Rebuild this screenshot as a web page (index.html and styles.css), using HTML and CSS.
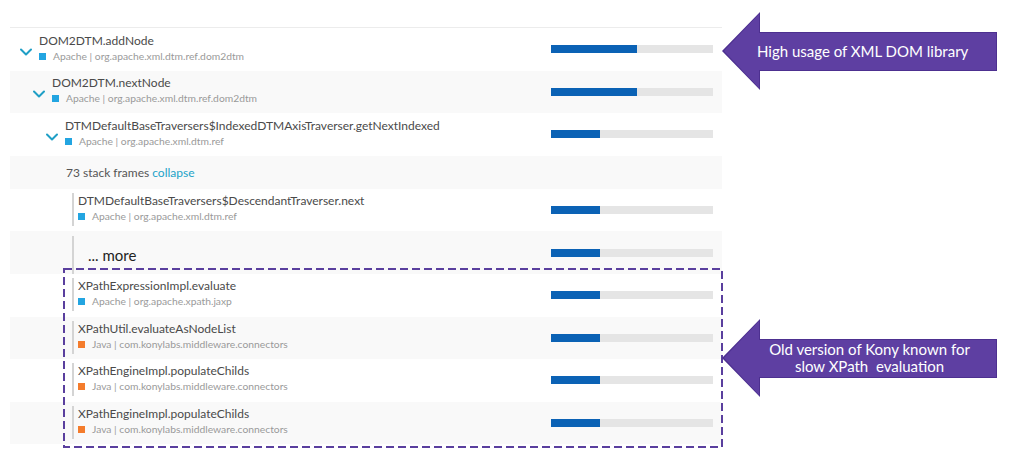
FILE: index.html
```html
<!DOCTYPE html>
<html>
<head>
<meta charset="utf-8">
<link rel="stylesheet" href="styles.css">
</head>
<body>
<div class="page">
  <div class="tree">
    <div class="row">
      <div class="cell lvl0">
        <span class="chev"><svg width="12" height="8" viewBox="0 0 12 8"><path d="M1 1.5 L6 6.5 L11 1.5" /></svg></span>
        <div class="frame-text">
          <div class="title">DOM2DTM.addNode</div>
          <div class="sub"><span class="sq apache"></span>Apache | org.apache.xml.dtm.ref.dom2dtm</div>
        </div>
      </div>
      <div class="bar"><div class="fill" style="width:53%"></div></div>
    </div>
    <div class="row alt">
      <div class="cell lvl1">
        <span class="chev"><svg width="12" height="8" viewBox="0 0 12 8"><path d="M1 1.5 L6 6.5 L11 1.5" /></svg></span>
        <div class="frame-text">
          <div class="title">DOM2DTM.nextNode</div>
          <div class="sub"><span class="sq apache"></span>Apache | org.apache.xml.dtm.ref.dom2dtm</div>
        </div>
      </div>
      <div class="bar"><div class="fill" style="width:53%"></div></div>
    </div>
    <div class="row">
      <div class="cell lvl2">
        <span class="chev"><svg width="12" height="8" viewBox="0 0 12 8"><path d="M1 1.5 L6 6.5 L11 1.5" /></svg></span>
        <div class="frame-text">
          <div class="title">DTMDefaultBaseTraversers$IndexedDTMAxisTraverser.getNextIndexed</div>
          <div class="sub"><span class="sq apache"></span>Apache | org.apache.xml.dtm.ref</div>
        </div>
      </div>
      <div class="bar"><div class="fill" style="width:30%"></div></div>
    </div>
    <div class="row alt short">
      <div class="cell stack">73 stack frames <span class="link">collapse</span></div>
    </div>
    <div class="row">
      <div class="cell framed">
        <div class="frame-text lined">
          <div class="title">DTMDefaultBaseTraversers$DescendantTraverser.next</div>
          <div class="sub"><span class="sq apache"></span>Apache | org.apache.xml.dtm.ref</div>
        </div>
      </div>
      <div class="bar"><div class="fill" style="width:30%"></div></div>
    </div>
    <div class="row alt">
      <div class="cell framed more-cell">
        <div class="more">... more</div>
      </div>
      <div class="bar"><div class="fill" style="width:30%"></div></div>
    </div>
    <div class="row">
      <div class="cell framed">
        <div class="frame-text lined">
          <div class="title">XPathExpressionImpl.evaluate</div>
          <div class="sub"><span class="sq apache"></span>Apache | org.apache.xpath.jaxp</div>
        </div>
      </div>
      <div class="bar"><div class="fill" style="width:30%"></div></div>
    </div>
    <div class="row alt">
      <div class="cell framed">
        <div class="frame-text lined">
          <div class="title">XPathUtil.evaluateAsNodeList</div>
          <div class="sub"><span class="sq java"></span>Java | com.konylabs.middleware.connectors</div>
        </div>
      </div>
      <div class="bar"><div class="fill" style="width:30%"></div></div>
    </div>
    <div class="row">
      <div class="cell framed">
        <div class="frame-text lined">
          <div class="title">XPathEngineImpl.populateChilds</div>
          <div class="sub"><span class="sq java"></span>Java | com.konylabs.middleware.connectors</div>
        </div>
      </div>
      <div class="bar"><div class="fill" style="width:30%"></div></div>
    </div>
    <div class="row alt">
      <div class="cell framed">
        <div class="frame-text lined">
          <div class="title">XPathEngineImpl.populateChilds</div>
          <div class="sub"><span class="sq java"></span>Java | com.konylabs.middleware.connectors</div>
        </div>
      </div>
      <div class="bar"><div class="fill" style="width:30%"></div></div>
    </div>
  </div>

  <svg class="dashbox" width="662" height="182" viewBox="0 0 662 182">
    <rect x="1" y="1" width="658" height="178" />
  </svg>

  <div class="callout callout-top"><span>High usage of XML DOM library</span></div>
  <div class="callout callout-bottom"><span>Old version of Kony known for<br>slow XPath&nbsp; evaluation</span></div>
</div>
</body>
</html>
```

FILE: styles.css
```css
html, body {
  margin: 0;
  padding: 0;
  background: #ffffff;
}

body {
  font-family: "Lato", "Open Sans", sans-serif;
  width: 1024px;
  height: 466px;
  overflow: hidden;
}

.page {
  position: relative;
  padding-top: 27px;
  padding-left: 10px;
}

.tree {
  width: 712px;
  border-top: 1px solid #ececec;
}

.row {
  display: grid;
  grid-template-columns: 1fr 162px;
  align-items: center;
  height: 42.6px;
  padding-right: 9px;
  box-sizing: border-box;
}

.row.alt {
  background: #f9f9f9;
}

.row.short {
  height: 33px;
}

.cell {
  display: flex;
  align-items: center;
  min-width: 0;
}

.lvl0 { padding-left: 10px; }
.lvl1 { padding-left: 23px; }
.lvl2 { padding-left: 36px; }

.chev {
  width: 12px;
  height: 8px;
  margin-top: 5px;
  margin-right: 7px;
  display: flex;
}

.chev svg path {
  fill: none;
  stroke: #1f9fc6;
  stroke-width: 2;
  stroke-linecap: round;
  stroke-linejoin: round;
}

.frame-text {
  display: flex;
  flex-direction: column;
  white-space: nowrap;
  margin-bottom: 3px;
}

.title {
  font-size: 12px;
  line-height: 15px;
  color: #4a4a4a;
}

.sub {
  font-size: 10.3px;
  line-height: 13px;
  color: #9a9a9a;
  display: flex;
  align-items: center;
  margin-top: 2px;
}

.sq {
  width: 7px;
  height: 7px;
  margin-right: 7px;
  flex: none;
}

.sq.apache { background: #23a5e1; }
.sq.java { background: #f47c2c; }

.stack {
  padding-left: 56px;
  font-size: 12px;
  color: #555555;
}

.link {
  color: #23a3c8;
  margin-left: 3px;
}

.framed {
  padding-left: 62px;
}

.lined {
  border-left: 2px solid #d4d4d4;
  padding: 0 0 3px 4px;
  margin-bottom: 1px;
}

.more-cell {
  align-self: stretch;
  align-items: stretch;
  padding-top: 5px;
}

.more {
  border-left: 2px solid #d4d4d4;
  padding-left: 14px;
  font-size: 15px;
  color: #222222;
  display: flex;
  align-items: center;
}

.bar {
  height: 8px;
  background: #e5e5e5;
  display: flex;
}

.fill {
  height: 100%;
  background: #0b62b5;
}

.dashbox {
  position: absolute;
  left: 63px;
  top: 268px;
}

.dashbox rect {
  fill: none;
  stroke: #5a3f9e;
  stroke-width: 2;
  stroke-dasharray: 8 4;
}

.callout {
  position: absolute;
  left: 722px;
  width: 275px;
  height: 78px;
  background: #4d3090;
  clip-path: polygon(0 50%, 38px 0, 38px 20px, 100% 20px, 100% 59px, 38px 59px, 38px 100%);
  display: flex;
  align-items: center;
  box-sizing: border-box;
}

.callout::before {
  content: "";
  position: absolute;
  inset: 0;
  background: #5e3fa2;
  clip-path: polygon(2px 50%, 37px 2px, 37px 21px, calc(100% - 1px) 21px, calc(100% - 1px) 58px, 37px 58px, 37px calc(100% - 2px));
}

.callout span {
  position: relative;
  color: #ffffff;
  font-size: 15px;
  line-height: 17px;
}

.callout-top {
  top: 12px;
  padding-left: 35px;
}

.callout-bottom {
  top: 319px;
  justify-content: center;
  padding-left: 20px;
  text-align: center;
}
```
